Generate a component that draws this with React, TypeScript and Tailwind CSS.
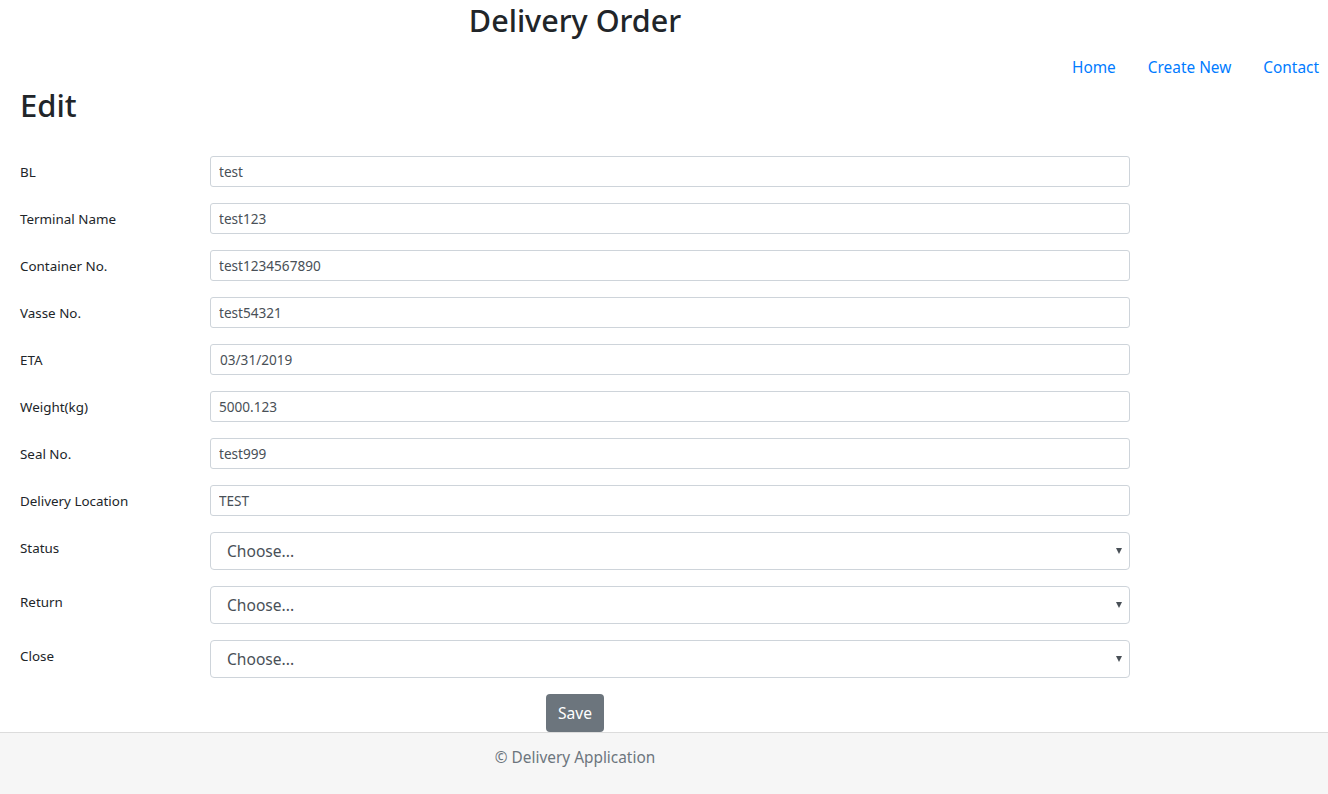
import { useState } from 'react';

const fields = [
  { label: 'BL', value: 'test' },
  { label: 'Terminal Name', value: 'test123' },
  { label: 'Container No.', value: 'test1234567890' },
  { label: 'Vasse No.', value: 'test54321' },
  { label: 'ETA', value: '03/31/2019' },
  { label: 'Weight(kg)', value: '5000.123' },
  { label: 'Seal No.', value: 'test999' },
  { label: 'Delivery Location', value: 'TEST' },
];

const selects = ['Status', 'Return', 'Close'];

export default function App() {
  const [form, setForm] = useState<Record<string, string>>(
    Object.fromEntries(fields.map(f => [f.label, f.value]))
  );

  return (
    <div className="min-h-screen flex flex-col bg-white text-[#212529] font-['Segoe_UI','Noto_Sans',sans-serif]">
      <div className="w-[1150px] px-[20px]">
        <h1 className="text-center text-[30.5px] font-medium leading-[41px]">Delivery Order</h1>
      </div>

      <nav className="mt-[15px] flex justify-end gap-[32px] pr-[9px] text-[15.4px] leading-[24px]">
        <a href="#" className="text-[#007bff]">Home</a>
        <a href="#" className="text-[#007bff]">Create New</a>
        <a href="#" className="text-[#007bff]">Contact</a>
      </nav>

      <div className="w-[1150px] px-[20px]">
        <h2 className="mt-[6px] text-[31px] font-medium leading-[38px]">Edit</h2>

        <form className="mt-[32px]" onSubmit={e => e.preventDefault()}>
          {fields.map(f => (
            <div key={f.label} className="flex mb-[16px]">
              <label className="w-[190px] shrink-0 pt-[6px] text-[13.4px] leading-[21px]">{f.label}</label>
              <input
                type="text"
                value={form[f.label]}
                onChange={e => setForm({ ...form, [f.label]: e.target.value })}
                className={`w-[920px] h-[31px] border border-[#ced4da] rounded-[3px] text-[13.6px] leading-[21px] text-[#495057] outline-none ${f.label === 'ETA' ? 'pl-[9px]' : 'px-[8px]'}`}
              />
            </div>
          ))}

          {selects.map(s => (
            <div key={s} className="flex mb-[16px]">
              <label className="w-[190px] shrink-0 pt-[6px] text-[13.4px] leading-[21px]">{s}</label>
              <div className="relative w-[920px]">
                <select className="appearance-none w-full h-[38px] border border-[#ced4da] rounded-[4px] pl-[16px] pr-[28px] pt-[2px] text-[15.6px] text-[#495057] bg-white outline-none">
                  <option>Choose...</option>
                </select>
                <span className="pointer-events-none absolute right-[8px] top-[16px] w-0 h-0 border-l-[3.5px] border-r-[3.5px] border-t-[6px] border-l-transparent border-r-transparent border-t-[#495057]" />
              </div>
            </div>
          ))}

          <div className="flex justify-center">
            <button type="submit" className="h-[38px] w-[58px] rounded-[4px] bg-[#6c757d] text-white text-[15.6px] leading-[24px]">
              Save
            </button>
          </div>
        </form>
      </div>

      <footer className="flex-1 border-t border-[#dcdcdc] bg-[#f6f6f6]">
        <div className="w-[1150px] px-[20px] pt-[13px] text-center text-[15.4px] leading-[24px] text-[#6c757d]">
          © Delivery Application
        </div>
      </footer>
    </div>
  );
}
